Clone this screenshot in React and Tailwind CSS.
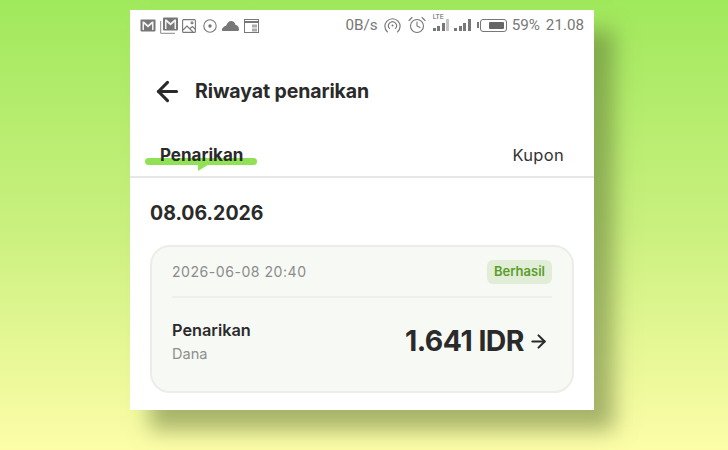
import React from "react";
import { ArrowLeft, ArrowRight } from "lucide-react";

const MailIcon = () => (
  <svg width="16" height="13" viewBox="0 0 16 13">
    <rect x="0.500" y="0.500" width="15" height="12" rx="1" fill="#777" />
    <path d="M2.500 11V2.500h1.500L8 6l4-3.500h1.500V11H12V5L8 8.500 4 5v6z" fill="#f2f2f2" />
  </svg>
);

const MailStackIcon = () => (
  <svg width="18" height="17" viewBox="0 0 18 17">
    <path d="M0.700 4v12.300H15" fill="none" stroke="#888" strokeWidth="1" />
    <rect x="3" y="0.500" width="15" height="13" rx="1" fill="#777" />
    <path d="M5 12V2.500h1.500l4 3.500 4-3.500H16V12h-1.500V5l-4 3.500-4-3.500v7z" fill="#f2f2f2" />
  </svg>
);

const PictureIcon = () => (
  <svg width="14" height="14" viewBox="0 0 14 14" fill="none" stroke="#777" strokeWidth="1.100">
    <rect x="0.600" y="0.600" width="12.800" height="12.800" rx="1" />
    <path d="M1 11l4-4 6 6M8 9.500L10.500 7.500l3 3" />
    <circle cx="10" cy="3.800" r="1" />
  </svg>
);

const DiscIcon = () => (
  <svg width="14" height="14" viewBox="0 0 14 14" fill="none" stroke="#777">
    <circle cx="7" cy="7" r="6.200" strokeWidth="1.100" />
    <circle cx="7" cy="7" r="1.700" fill="#777" stroke="none" />
  </svg>
);

const CloudIcon = () => (
  <svg width="17" height="10" viewBox="0 0 17 10">
    <path d="M1.500 10a1.500 1.500 0 0 1-.5-3c.5-1.500 1.500-2 3-2C5 2 7 0 9 0c2.500 0 4 1.500 4.500 4 2 0 3.500 2 3.500 4.500 0 .8-.5 1.500-1.500 1.500z" fill="#777" />
  </svg>
);

const CalendarIcon = () => (
  <svg width="15" height="14" viewBox="0 0 15 14" fill="none" stroke="#777">
    <rect x="0.500" y="0.500" width="14" height="13" />
    <path d="M0.500 3h14" strokeWidth="2" />
    <rect x="8" y="5.500" width="5" height="3" fill="#aaa" stroke="none" />
    <rect x="8" y="9.500" width="5" height="3" fill="#aaa" stroke="none" />
  </svg>
);

const HotspotIcon = () => (
  <svg width="17" height="17" viewBox="0 0 17 17" fill="none" stroke="#777" strokeWidth="1.100" strokeLinecap="round">
    <path d="M3.500 15A7.600 7.600 0 1 1 13.500 15" />
    <path d="M5.500 11.500A4 4 0 1 1 11.500 11.500" />
    <circle cx="8.500" cy="8.500" r="1" fill="#777" stroke="none" />
  </svg>
);

const AlarmIcon = () => (
  <svg width="18" height="18" viewBox="0 0 18 18" fill="none" stroke="#777" strokeWidth="1.100" strokeLinecap="round">
    <circle cx="9" cy="10" r="6.500" />
    <path d="M9 6v4l3 1.500M1 4.500l3-3M17 4.500l-3-3" />
  </svg>
);

const SignalIcon = ({ lte }) => (
  <span className="relative flex items-end gap-[1.500px] h-[12px]">
    {lte && (
      <span className="absolute left-0 top-[-6px] text-[7px] leading-[8px] text-[#666] [font-family:Roboto,sans-serif]">LTE</span>
    )}
    <span className="w-[3px] h-[3px] bg-[#777]" />
    <span className="w-[3px] h-[5px] bg-[#777]" />
    <span className="w-[3px] h-[8px] bg-[#777]" />
    <span className={`w-[3px] h-[12px] ${lte ? "bg-[#c4c4c4]" : "bg-[#777]"}`} />
  </span>
);

const BatteryIcon = () => (
  <span className="flex items-center gap-[1px]">
    <span className="w-[2px] h-[6px] bg-[#777]" />
    <span className="flex justify-end w-[27px] h-[13px] border border-[#777] rounded-[3px] p-[2px]">
      <span className="w-[15px] h-full bg-[#666] rounded-[1px]" />
    </span>
  </span>
);

const StatusBar = () => (
  <div className="flex justify-between items-center h-[31px] pl-[10px] pr-[10px] text-[#777] text-[15.200px] [font-family:Roboto,sans-serif]">
    <div className="flex items-center">
      <MailIcon />
      <span className="w-[4px]" />
      <MailStackIcon />
      <span className="w-[4px]" />
      <PictureIcon />
      <span className="w-[7px]" />
      <DiscIcon />
      <span className="w-[5px]" />
      <CloudIcon />
      <span className="w-[5px]" />
      <CalendarIcon />
    </div>
    <div className="flex items-center">
      <span>0B/s</span>
      <span className="w-[6px]" />
      <HotspotIcon />
      <span className="w-[7px]" />
      <AlarmIcon />
      <span className="w-[7px]" />
      <SignalIcon lte />
      <span className="w-[5px]" />
      <SignalIcon />
      <span className="w-[6px]" />
      <BatteryIcon />
      <span className="ml-[5px]">59%</span>
      <span className="ml-[6px]">21.08</span>
    </div>
  </div>
);

const Header = () => (
  <div className="flex items-center h-[60px] mt-[20px] pt-[1px] pl-[22px] gap-[12px]">
    <ArrowLeft size={31} strokeWidth={2.4} className="text-[#2a2a2a]" />
    <span className="text-[19.500px] font-bold text-[#2a2a2a] tracking-[-0.1px]">Riwayat penarikan</span>
  </div>
);

const Tabs = () => (
  <div className="flex justify-between items-center h-[57px] pt-[14px] pl-[30px] pr-[30px] border-b-2 border-[#e6e8e6]">
    <span className="relative text-[17px] font-bold text-[#2a2a2a]">
      <svg className="absolute left-[-15px] top-[15px]" width="114" height="15" viewBox="0 0 114 15">
        <rect x="0" y="0" width="112" height="7" rx="3.500" fill="#90e155" />
        <path d="M53 5h13l-13 8z" fill="#90e155" />
      </svg>
      <span className="relative">Penarikan</span>
    </span>
    <span className="text-[16.500px] text-[#333] tracking-[0.3px]">Kupon</span>
  </div>
);

const Card = () => (
  <div className="mx-[20px] mt-[18px] h-[148px] px-[20px] rounded-[20px] border-2 border-[#ebeee8] bg-[#f7f9f5]">
    <div className="flex justify-between items-center h-[51px] pt-[1px] border-b-2 border-[#eef0eb]">
      <span className="text-[14.100px] text-[#8c8c8c] tracking-[0.5px]">2026-06-08 20:40</span>
      <span className="px-[7px] py-[2px] rounded-[6px] bg-[#e2edd7] text-[13px] font-semibold text-[#5a9e2a]">Berhasil</span>
    </div>
    <div className="flex justify-between items-center h-[85px]">
      <div className="flex flex-col gap-[4px]">
        <span className="text-[16.300px] font-semibold text-[#2a2a2a] leading-[22px]">Penarikan</span>
        <span className="text-[14.600px] text-[#8f8f8f] leading-[18px]">Dana</span>
      </div>
      <div className="flex items-center gap-[4px] pr-[3px] pt-[2px]">
        <span className="text-[28.400px] font-bold text-[#2a2a2a] tracking-[-0.5px]">1.641 IDR</span>
        <ArrowRight size={21} strokeWidth={2.4} className="text-[#2a2a2a]" />
      </div>
    </div>
  </div>
);

export default function App() {
  return (
    <div className="w-[728px] h-[450px] pt-[10px] pl-[130px] overflow-hidden bg-gradient-to-b from-[#a0e95c] via-[#c9f07e] to-[#fdfda8] [font-family:Inter,sans-serif]">
      <div className="w-[464px] h-[400px] bg-white shadow-[20px_20px_20px_rgba(90,110,50,0.5)]">
        <StatusBar />
        <Header />
        <Tabs />
        <div className="pt-[21px] pl-[20px] text-[19.500px] font-bold text-[#2a2a2a] leading-[28px]">08.06.2026</div>
        <Card />
      </div>
    </div>
  );
}
